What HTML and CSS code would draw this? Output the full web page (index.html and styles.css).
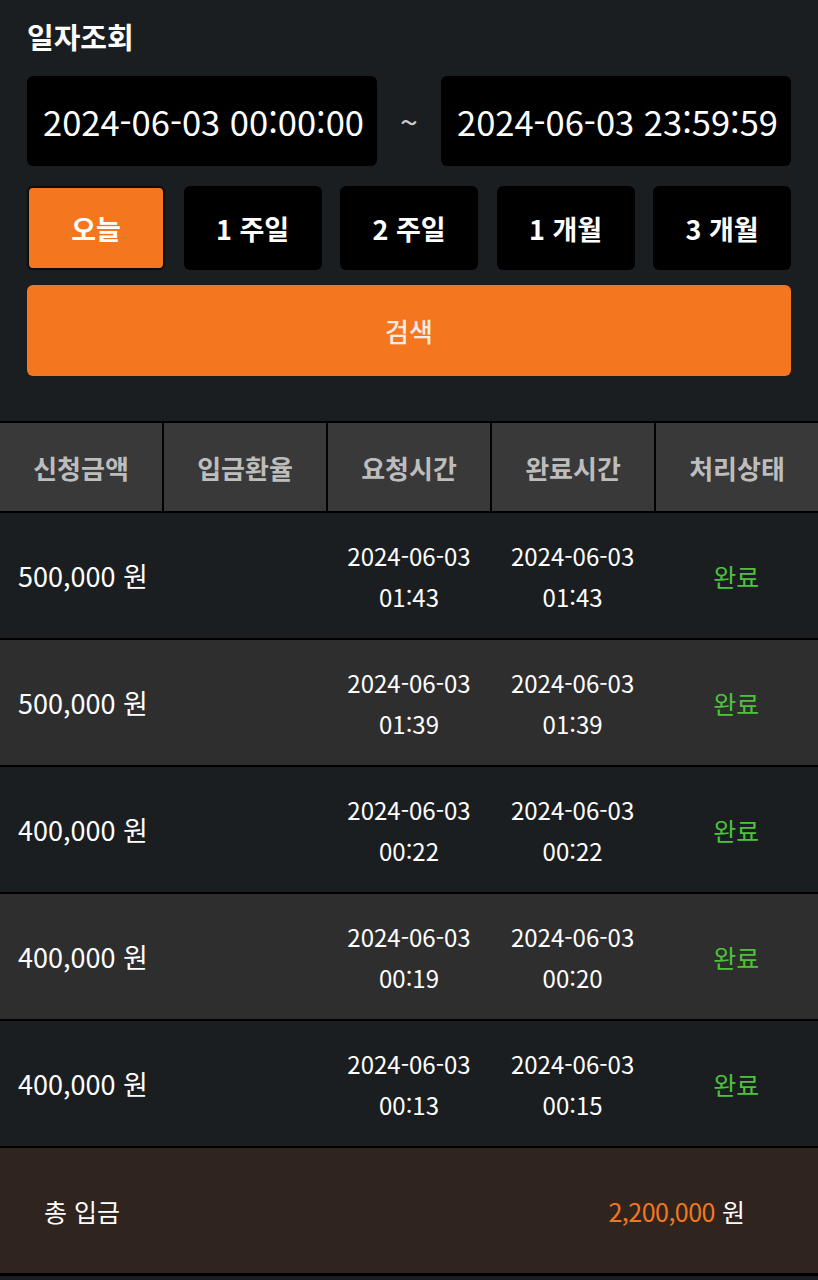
FILE: index.html
```html
<!DOCTYPE html>
<html lang="ko">

<head>
    <meta charset="UTF-8">
    <meta name="viewport" content="width=device-width, initial-scale=1.0">
    <title>일자조회</title>
    <link rel="stylesheet" href="styles.css">
</head>

<body>
    <div class="search_box">
        <h2 class="title">일자조회</h2>
        <div class="date_row">
            <div class="date_input">2024-06-03 00:00:00</div>
            <span class="tilde">~</span>
            <div class="date_input">2024-06-03 23:59:59</div>
        </div>
        <div class="period_row">
            <button class="period active">오늘</button>
            <button class="period">1 주일</button>
            <button class="period">2 주일</button>
            <button class="period">1 개월</button>
            <button class="period">3 개월</button>
        </div>
        <button class="search_btn">검색</button>
    </div>

    <div class="list">
        <div class="list_head">
            <div>신청금액</div>
            <div>입금환율</div>
            <div>요청시간</div>
            <div>완료시간</div>
            <div>처리상태</div>
        </div>
        <div class="list_row">
            <div class="amount">500,000 원</div>
            <div></div>
            <div class="time">2024-06-03<br>01:43</div>
            <div class="time">2024-06-03<br>01:43</div>
            <div class="state">완료</div>
        </div>
        <div class="list_row">
            <div class="amount">500,000 원</div>
            <div></div>
            <div class="time">2024-06-03<br>01:39</div>
            <div class="time">2024-06-03<br>01:39</div>
            <div class="state">완료</div>
        </div>
        <div class="list_row">
            <div class="amount">400,000 원</div>
            <div></div>
            <div class="time">2024-06-03<br>00:22</div>
            <div class="time">2024-06-03<br>00:22</div>
            <div class="state">완료</div>
        </div>
        <div class="list_row">
            <div class="amount">400,000 원</div>
            <div></div>
            <div class="time">2024-06-03<br>00:19</div>
            <div class="time">2024-06-03<br>00:20</div>
            <div class="state">완료</div>
        </div>
        <div class="list_row">
            <div class="amount">400,000 원</div>
            <div></div>
            <div class="time">2024-06-03<br>00:13</div>
            <div class="time">2024-06-03<br>00:15</div>
            <div class="state">완료</div>
        </div>
    </div>

    <div class="total">
        <span>총 입금</span>
        <span><em>2,200,000</em> 원</span>
    </div>
</body>

</html>
```

FILE: styles.css
```css
* {
    margin: 0;
    padding: 0;
    box-sizing: border-box;
}

body {
    background: #1b1e20;
    color: #fff;
    font-family: "Noto Sans CJK KR", "Noto Sans", sans-serif;
}

.search_box {
    padding: 14px 27px 45px 27px;
}

.title {
    font-size: 29px;
    font-weight: 700;
    line-height: 44px;
    height: 44px;
    margin-bottom: 18px;
}

.date_row {
    display: flex;
    align-items: center;
    justify-content: space-between;
}

.date_input {
    width: 350px;
    height: 90px;
    background: #000;
    border-radius: 6px;
    font-size: 34.5px;
    line-height: 90px;
    padding-left: 16px;
    white-space: nowrap;
}

.tilde {
    font-size: 32px;
    color: #ccc;
}

.period_row {
    display: flex;
    justify-content: space-between;
    margin-top: 20px;
}

.period {
    width: 138px;
    height: 84px;
    background: #000;
    border: none;
    border-radius: 6px;
    color: #fff;
    font-family: inherit;
    font-size: 27px;
    font-weight: 700;
}

.period.active {
    background: #f4761e;
    border: 2px solid #0d0d0d;
}

.search_btn {
    display: block;
    width: 100%;
    height: 91px;
    margin-top: 15px;
    background: #f4761e;
    border: none;
    border-radius: 6px;
    color: #f8ece2;
    font-family: inherit;
    font-size: 26px;
    font-weight: 500;
}

.list {
    border-top: 2px solid #000;
}

.list_head,
.list_row {
    display: grid;
    grid-template-columns: repeat(5, 1fr);
}

.list_head {
    column-gap: 2px;
    background: #000;
    border-bottom: 2px solid #000;
}

.list_head div {
    height: 88px;
    background: #393939;
    color: #bdbdbd;
    font-size: 26px;
    font-weight: 700;
    display: flex;
    align-items: center;
    justify-content: center;
}

.list_row {
    height: 127px;
    border-bottom: 2px solid #000;
    align-items: center;
}

.list_row:nth-child(odd) {
    background: #2e2e2e;
}

.amount {
    font-size: 27px;
    padding-left: 18px;
}

.time {
    font-size: 24px;
    line-height: 41px;
    text-align: center;
}

.state {
    font-size: 25px;
    color: #4cc33b;
    text-align: center;
}

.total {
    height: 128px;
    background: #2f241e;
    border-bottom: 3px solid #000;
    display: flex;
    align-items: center;
    justify-content: space-between;
    padding: 0 73px 0 44px;
    font-size: 25px;
}

.total em {
    font-style: normal;
    color: #f4761e;
    letter-spacing: -0.5px;
}
```
